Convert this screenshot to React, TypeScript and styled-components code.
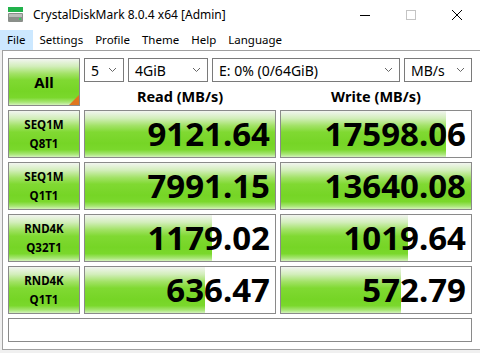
import React from 'react';
import styled, { createGlobalStyle } from 'styled-components';

const GlobalStyle = createGlobalStyle`
  html, body {
    margin: 0;
    padding: 0;
    background: #f0f0f0;
  }
  * {
    box-sizing: border-box;
  }
`;

const UI_FONT = `"Noto Sans", "Open Sans", "Liberation Sans", sans-serif`;

const GREEN = `linear-gradient(180deg,
  #f2f5f0 0%,
  #d2eeba 16%,
  #a2e266 32%,
  #80d932 46%,
  #76d526 70%,
  #7ad82c 84%,
  #a8e676 94%,
  #d4f2bc 100%)`;

const Window = styled.div`
  width: 480px;
  height: 353px;
  background: #f0f0f0;
  font-family: ${UI_FONT};
  color: #000;
  overflow: hidden;
`;

const TitleBar = styled.div`
  height: 30px;
  background: #fff;
  display: flex;
  align-items: center;
  padding-left: 6px;
`;

const TitleText = styled.div`
  flex: 1;
  margin-left: 7px;
  font-size: 12px;
  margin-top: -1px;
`;

const WinButton = styled.div`
  width: 46px;
  height: 30px;
  display: flex;
  align-items: center;
  justify-content: center;
`;

const MenuBar = styled.div`
  height: 20px;
  background: #fff;
  display: flex;
  align-items: stretch;
`;

const MenuItem = styled.div<{ active?: boolean }>`
  padding: 0 6px;
  font-size: 11.5px;
  line-height: 19px;
  background: ${p => (p.active ? '#cce8ff' : 'transparent')};
  &:first-child {
    padding: 0 8px 0 7px;
  }
`;

const Frame = styled.div`
  margin-left: 2px;
  height: 300px;
  border-top: 1px solid #a0a0a0;
  border-left: 1px solid #a0a0a0;
  border-bottom: 1px solid #a0a0a0;
  background: #fff;
  padding: 7px 0 0 5px;
`;

const Grid = styled.div`
  display: grid;
  grid-template-columns: 72px 192px 192px;
  grid-template-rows: 24px 20px 48px 48px 48px 48px 24px;
  column-gap: 4px;
  row-gap: 4px;
`;

const AllButton = styled.div`
  grid-row: 1 / span 2;
  position: relative;
  border: 1px solid #8a8a8a;
  background: ${GREEN};
  display: flex;
  align-items: center;
  justify-content: center;
  font-weight: 700;
  font-size: 15px;
  overflow: hidden;
`;

const Corner = styled.div`
  position: absolute;
  right: 0;
  bottom: 0;
  width: 0;
  height: 0;
  border-left: 10px solid transparent;
  border-bottom: 10px solid #e0761e;
`;

const Controls = styled.div`
  grid-column: 2 / span 2;
  display: flex;
  gap: 4px;
`;

const Select = styled.div<{ w: number }>`
  width: ${p => p.w}px;
  height: 24px;
  border: 1px solid #7a7a7a;
  background: #fff;
  display: flex;
  align-items: center;
  padding: 0 6px 0 6px;
  font-size: 14px;
  justify-content: space-between;
`;

const Header = styled.div`
  font-weight: 700;
  font-size: 14.5px;
  text-align: center;
  line-height: 20px;
`;

const Label = styled.div`
  border: 1px solid #8a8a8a;
  background: ${GREEN};
  display: flex;
  flex-direction: column;
  align-items: center;
  justify-content: center;
  font-weight: 700;
  font-size: 11.5px;
  line-height: 19px;
`;

const Cell = styled.div`
  position: relative;
  border: 1px solid #8a8a8a;
  background: #fff;
  overflow: hidden;
`;

const Fill = styled.div`
  position: absolute;
  left: 0;
  top: 0;
  bottom: 0;
  background: ${GREEN};
`;

const Value = styled.div`
  position: absolute;
  right: 5px;
  top: 0;
  bottom: 0;
  display: flex;
  align-items: center;
  font-weight: 700;
  font-size: 33px;
  padding-bottom: 1px;
`;

const Comment = styled.div`
  grid-column: 1 / span 3;
  border: 1px solid #8a8a8a;
  background: #fff;
`;

const Chevron = () => (
  <svg width="9" height="6" viewBox="0 0 9 6">
    <path d="M1 1 L4.5 4.5 L8 1" fill="none" stroke="#666" strokeWidth="1" />
  </svg>
);

const AppIcon = () => (
  <svg width="20" height="18" viewBox="0 0 20 18">
    <rect x="2" y="1" width="15" height="5" fill="#21b24b" />
    <rect x="2" y="7" width="15" height="9" rx="1" fill="#8a8f8a" />
    <rect x="3" y="8" width="13" height="3" fill="#b9bdb9" />
    <rect x="13" y="12" width="2" height="2" fill="#2fd35a" />
  </svg>
);

const rows = [
  { a: 'SEQ1M', b: 'Q8T1', read: '9121.64', rp: 100, write: '17598.06', wp: 87 },
  { a: 'SEQ1M', b: 'Q1T1', read: '7991.15', rp: 100, write: '13640.08', wp: 100 },
  { a: 'RND4K', b: 'Q32T1', read: '1179.02', rp: 67, write: '1019.64', wp: 67 },
  { a: 'RND4K', b: 'Q1T1', read: '636.47', rp: 63, write: '572.79', wp: 63 },
];

const menus = ['File', 'Settings', 'Profile', 'Theme', 'Help', 'Language'];

export default function App() {
  return (
    <Window>
      <GlobalStyle />
      <TitleBar>
        <AppIcon />
        <TitleText>CrystalDiskMark 8.0.4 x64 [Admin]</TitleText>
        <WinButton>
          <svg width="12" height="12" viewBox="0 0 12 12">
            <line x1="1" y1="6.5" x2="11" y2="6.5" stroke="#000" strokeWidth="1" />
          </svg>
        </WinButton>
        <WinButton>
          <svg width="12" height="12" viewBox="0 0 12 12">
            <rect x="1.5" y="1.5" width="9" height="9" fill="none" stroke="#c4c4c4" strokeWidth="1" />
          </svg>
        </WinButton>
        <WinButton>
          <svg width="12" height="12" viewBox="0 0 12 12">
            <path d="M1 1 L11 11 M11 1 L1 11" stroke="#000" strokeWidth="1" />
          </svg>
        </WinButton>
      </TitleBar>
      <MenuBar>
        {menus.map((m, i) => (
          <MenuItem key={m} active={i === 0}>{m}</MenuItem>
        ))}
      </MenuBar>
      <Frame>
        <Grid>
          <AllButton>
            All
            <Corner />
          </AllButton>
          <Controls>
            <Select w={40}>5<Chevron /></Select>
            <Select w={80}>4GiB<Chevron /></Select>
            <Select w={188}>E: 0% (0/64GiB)<Chevron /></Select>
            <Select w={68}>MB/s<Chevron /></Select>
          </Controls>
          <Header>Read (MB/s)</Header>
          <Header>Write (MB/s)</Header>
          {rows.map(r => (
            <React.Fragment key={r.a + r.b}>
              <Label>
                <span>{r.a}</span>
                <span>{r.b}</span>
              </Label>
              <Cell>
                <Fill style={{ width: `${r.rp}%` }} />
                <Value>{r.read}</Value>
              </Cell>
              <Cell>
                <Fill style={{ width: `${r.wp}%` }} />
                <Value>{r.write}</Value>
              </Cell>
            </React.Fragment>
          ))}
          <Comment />
        </Grid>
      </Frame>
    </Window>
  );
}
